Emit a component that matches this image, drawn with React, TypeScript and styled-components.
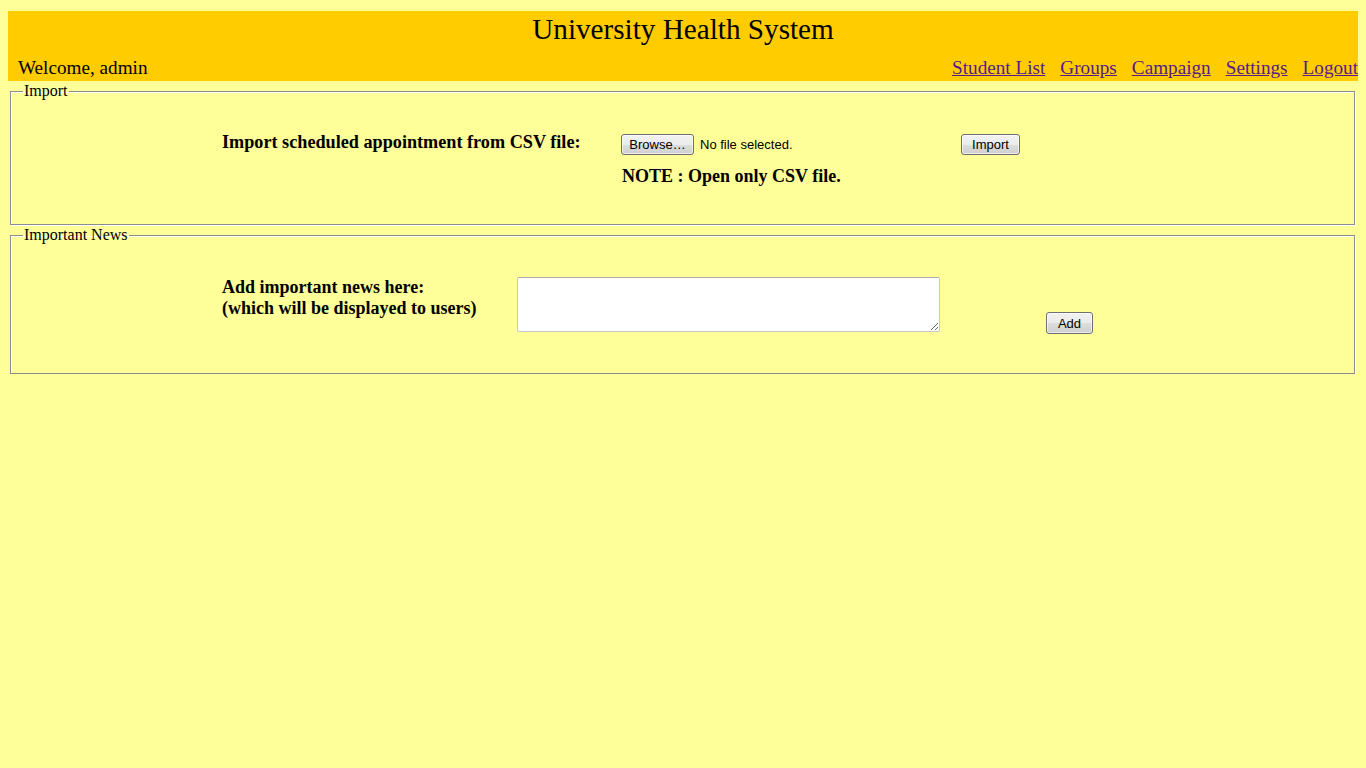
import React from 'react';
import styled, { createGlobalStyle } from 'styled-components';

const GlobalStyle = createGlobalStyle`
  body {
    margin: 8px;
    background-color: #ffff99;
    font-family: "Liberation Serif", "Times New Roman", serif;
    font-size: 16px;
    color: #000;
  }
`;

const Header = styled.div`
  margin-top: 3px;
  height: 70px;
  background-color: #ffcc00;
  display: flex;
  flex-direction: column;
`;

const Title = styled.h1`
  margin: 0;
  font-size: 29.2px;
  font-weight: normal;
  text-align: center;
  line-height: 36px;
`;

const NavRow = styled.div`
  display: flex;
  justify-content: space-between;
  align-items: flex-end;
  margin-top: auto;
  padding-left: 10px;
  font-size: 19.2px;
  line-height: 24px;
  padding-bottom: 1px;
`;

const NavLinks = styled.nav`
  display: flex;
  gap: 15px;
`;

const NavLink = styled.a`
  color: #551a8b;
  text-decoration: underline;
`;

const Box = styled.fieldset`
  margin: 1px 3px 0 2px;
  padding: 0 12px;
  border: 1px solid #8c8c8c;
  box-shadow: 1px 1px 0 #ffffff, inset 1px 1px 0 #ffffff;
`;

const Legend = styled.legend`
  padding: 0 1px;
  margin-left: 0;
  font-size: 16px;
`;

const Row = styled.div<{ $cols: string; $pad: string }>`
  display: grid;
  grid-template-columns: ${(p) => p.$cols};
  padding: ${(p) => p.$pad};
  padding-left: 199px;
`;

const Label = styled.div<{ $size?: number }>`
  font-weight: bold;
  font-size: ${(p) => p.$size ?? 18.2}px;
  line-height: 21px;
`;

const FileCell = styled.div`
  display: flex;
  flex-direction: column;
  gap: 11px;
  padding-top: 2px;
`;

const FileLine = styled.div`
  display: flex;
  align-items: center;
  gap: 6px;
  font-family: "Liberation Sans", Arial, sans-serif;
  font-size: 13px;
`;

const Note = styled.div`
  font-weight: bold;
  font-size: 18px;
  line-height: 21px;
  padding-left: 1px;
`;

const ButtonCell = styled.div<{ $top: number; $left?: number }>`
  padding-top: ${(p) => p.$top}px;
  padding-left: ${(p) => p.$left ?? 0}px;
`;

const Button = styled.button<{ $w: number; $h?: number }>`
  width: ${(p) => p.$w}px;
  height: ${(p) => p.$h ?? 21}px;
  padding: 0;
  font-family: "Liberation Sans", Arial, sans-serif;
  font-size: 13px;
  color: #000;
  border: 1px solid #707070;
  border-radius: 3px;
  background: linear-gradient(#f2f2f2 0%, #ebebeb 50%, #dddddd 51%, #cfcfcf 100%);
  box-shadow: inset 0 0 0 1px rgba(255, 255, 255, 0.6);
`;

const News = styled.textarea`
  width: 423px;
  height: 55px;
  box-sizing: border-box;
  border: 1px solid #c8c8c8;
  border-top-color: #ababab;
  border-radius: 2px;
  background: #fff;
  resize: both;
  margin: 0;
`;

export default function App() {
  return (
    <>
      <GlobalStyle />
      <Header>
        <Title>University Health System</Title>
        <NavRow>
          <span>Welcome, admin</span>
          <NavLinks>
            <NavLink href="#">Student List</NavLink>
            <NavLink href="#">Groups</NavLink>
            <NavLink href="#">Campaign</NavLink>
            <NavLink href="#">Settings</NavLink>
            <NavLink href="#">Logout</NavLink>
          </NavLinks>
        </NavRow>
      </Header>

      <Box>
        <Legend>Import</Legend>
        <Row $cols="399px 340px 80px" $pad="32px 0 37px">
          <Label>Import scheduled appointment from CSV file:</Label>
          <FileCell>
            <FileLine>
              <Button type="button" $w={73}>Browse…</Button>
              <span>No file selected.</span>
            </FileLine>
            <Note>NOTE : Open only CSV file.</Note>
          </FileCell>
          <ButtonCell $top={2}>
            <Button type="button" $w={59}>Import</Button>
          </ButtonCell>
        </Row>
      </Box>

      <Box>
        <Legend>Important News</Legend>
        <Row $cols="295px 423px auto" $pad="33px 0 39px">
          <Label $size={18}>
            Add important news here:
            <br />
            (which will be displayed to users)
          </Label>
          <News />
          <ButtonCell $top={35} $left={106}>
            <Button type="button" $w={47} $h={22}>Add</Button>
          </ButtonCell>
        </Row>
      </Box>
    </>
  );
}
